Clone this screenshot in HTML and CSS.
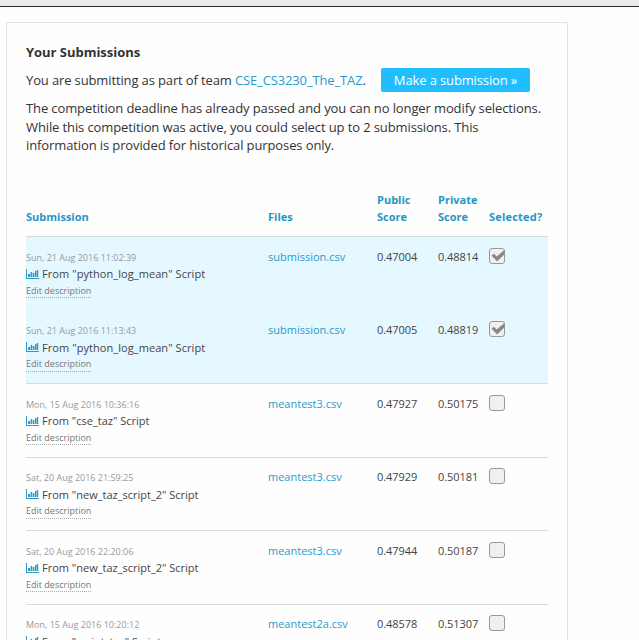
FILE: index.html
```html
<!DOCTYPE html>
<html lang="en">
<head>
<meta charset="utf-8">
<title>Your Submissions</title>
<link rel="stylesheet" href="styles.css">
</head>
<body>
<svg class="defs" aria-hidden="true">
  <symbol id="chart" viewBox="0 0 13 10">
    <path d="M0 0h1v9h12v1H0zM2 5h2v3H2zM4.6 3h1.6v5H4.6zM6.8 4h1.6v4H6.8zM9 2h1.4v6H9zM10.8 1h1.4v7h-1.4z"/>
  </symbol>
  <symbol id="check" viewBox="0 0 16 16">
    <path d="M2.5 7.5 5 5.8l2.7 2.7L15.5 2v4.3l-7.4 7.2z"/>
  </symbol>
</svg>
<div class="topbar"></div>
<main class="panel">
  <h1>Your Submissions</h1>
  <div class="team"><span>You are submitting as part of team <a href="#">CSE_CS3230_The_TAZ</a>.</span><a class="button" href="#">Make a submission »</a></div>
  <p class="notice">The competition deadline has already passed and you can no longer modify selections.<br>While this competition was active, you could select up to 2 submissions. This<br>information is provided for historical purposes only.</p>
  <div class="table">
    <div class="row head"><span>Submission</span><span>Files</span><span>Public<br>Score</span><span>Private<br>Score</span><span class="selected">Selected?</span></div>
    <div class="row picked joined">
      <div><time>Sun, 21 Aug 2016 11:02:39</time><div class="source wide"><svg class="chart"><use href="#chart"/></svg>From "python_log_mean" Script</div><a class="edit" href="#">Edit description</a></div>
      <a class="file" href="#">submission.csv</a><span>0.47004</span><span>0.48814</span><span class="box"><svg><use href="#check"/></svg></span>
    </div>
    <div class="row picked">
      <div><time>Sun, 21 Aug 2016 11:13:43</time><div class="source wide"><svg class="chart"><use href="#chart"/></svg>From "python_log_mean" Script</div><a class="edit" href="#">Edit description</a></div>
      <a class="file" href="#">submission.csv</a><span>0.47005</span><span>0.48819</span><span class="box"><svg><use href="#check"/></svg></span>
    </div>
    <div class="row">
      <div><time>Mon, 15 Aug 2016 10:36:16</time><div class="source"><svg class="chart"><use href="#chart"/></svg>From "cse_taz" Script</div><a class="edit" href="#">Edit description</a></div>
      <a class="file" href="#">meantest3.csv</a><span>0.47927</span><span>0.50175</span><span class="box"></span>
    </div>
    <div class="row">
      <div><time>Sat, 20 Aug 2016 21:59:25</time><div class="source"><svg class="chart"><use href="#chart"/></svg>From "new_taz_script_2" Script</div><a class="edit" href="#">Edit description</a></div>
      <a class="file" href="#">meantest3.csv</a><span>0.47929</span><span>0.50181</span><span class="box"></span>
    </div>
    <div class="row">
      <div><time>Sat, 20 Aug 2016 22:20:06</time><div class="source"><svg class="chart"><use href="#chart"/></svg>From "new_taz_script_2" Script</div><a class="edit" href="#">Edit description</a></div>
      <a class="file" href="#">meantest3.csv</a><span>0.47944</span><span>0.50187</span><span class="box"></span>
    </div>
    <div class="row">
      <div><time>Mon, 15 Aug 2016 10:20:12</time><div class="source"><svg class="chart"><use href="#chart"/></svg>From "script_taz" Script</div><a class="edit" href="#">Edit description</a></div>
      <a class="file" href="#">meantest2a.csv</a><span>0.48578</span><span>0.51307</span><span class="box"></span>
    </div>
  </div>
</main>
</body>
</html>
```
FILE: styles.css
```css
* { box-sizing: border-box; }
body {
  margin: 0;
  height: 640px;
  overflow: hidden;
  background: #fefefe;
  color: #333;
  font: 13px/18.5px "Open Sans", sans-serif;
}
a { color: #2a9ac7; text-decoration: none; }
.defs { display: none; }
.topbar { height: 7px; background: #ebebeb; border-bottom: 1px solid #222b2b; }
.panel {
  width: 562px;
  height: 618px;
  overflow: hidden;
  margin: 15px 0 0 6px;
  padding: 20px 19px 0;
  border: 1px solid #e2e2e2;
  border-bottom: 0;
  white-space: nowrap;
}
h1 { margin: 0; font-size: 13px; line-height: 19px; letter-spacing: -0.03px; }
.team { display: flex; align-items: center; height: 24px; margin-top: 6px; letter-spacing: -0.13px; }
.team span { width: 339px; }
.button {
  width: 149px;
  height: 24px;
  margin-left: 16px;
  border-radius: 2px;
  background: #20beff;
  color: #fff;
  line-height: 24px;
  text-align: center;
}
.notice { margin: 7px 0 0; letter-spacing: -0.11px; }
.table { margin-top: 36px; color: #444; font-size: 11px; line-height: 17px; }
.row {
  display: grid;
  grid-template-columns: 242px 109px 61px 51px 59px;
  align-items: start;
  height: 73.5px;
  padding-top: 11.7px;
  border-bottom: 1px solid #dadada;
}
.head { height: 46.6px; padding: 0 0 11.6px; align-items: end; color: #2496c5; font-weight: bold; }
.head .selected { letter-spacing: 0.2px; }
.row:not(.head) > .file, .row:not(.head) > span { margin-top: -0.8px; }
.file + span, .file + span + span { letter-spacing: -0.04px; }
.picked { background: #e5f7ff; }
.joined { border-bottom-color: transparent; }
time { display: block; color: #999; font-size: 9px; line-height: 17px; }
.source { display: flex; align-items: center; height: 16px; }
.wide { letter-spacing: 0.07px; }
.chart { width: 13px; height: 10px; margin-right: 3px; fill: #2a9ac7; }
.edit {
  display: block;
  width: 65px;
  height: 16.3px;
  border-bottom: 1px dotted #aaa;
  color: #777;
  font-size: 9px;
  line-height: 18.4px;
}
.box {
  width: 16px;
  height: 16px;
  border: 1px solid #999;
  border-radius: 3px;
  background: #f0f0f0;
}
.box svg { display: block; width: 16px; height: 16px; margin: -1px; fill: #888; }
```
